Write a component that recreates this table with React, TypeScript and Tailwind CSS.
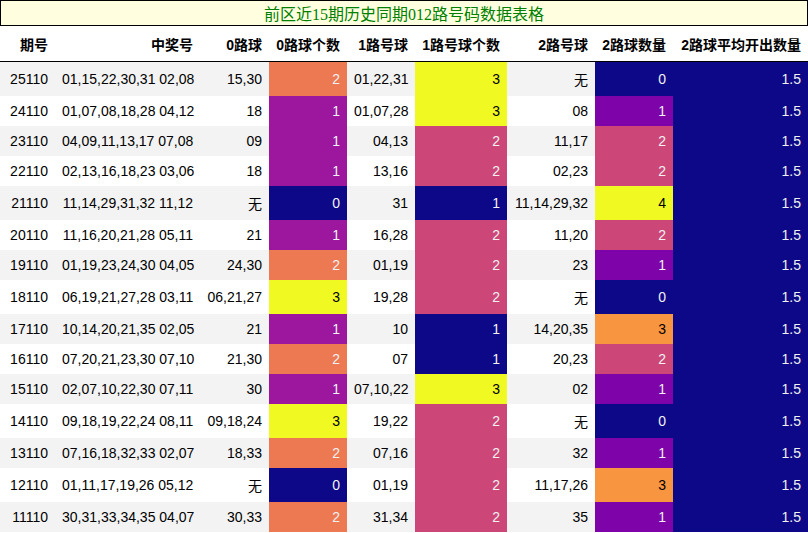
import React from 'react';

type Row = [string, string, string, number, string, number, string, number, string];

const rows: Row[] = [
  ['25110', '01,15,22,30,31 02,08', '15,30', 2, '01,22,31', 3, '无', 0, '1.5'],
  ['24110', '01,07,08,18,28 04,12', '18', 1, '01,07,28', 3, '08', 1, '1.5'],
  ['23110', '04,09,11,13,17 07,08', '09', 1, '04,13', 2, '11,17', 2, '1.5'],
  ['22110', '02,13,16,18,23 03,06', '18', 1, '13,16', 2, '02,23', 2, '1.5'],
  ['21110', '11,14,29,31,32 11,12', '无', 0, '31', 1, '11,14,29,32', 4, '1.5'],
  ['20110', '11,16,20,21,28 05,11', '21', 1, '16,28', 2, '11,20', 2, '1.5'],
  ['19110', '01,19,23,24,30 04,05', '24,30', 2, '01,19', 2, '23', 1, '1.5'],
  ['18110', '06,19,21,27,28 03,11', '06,21,27', 3, '19,28', 2, '无', 0, '1.5'],
  ['17110', '10,14,20,21,35 02,05', '21', 1, '10', 1, '14,20,35', 3, '1.5'],
  ['16110', '07,20,21,23,30 07,10', '21,30', 2, '07', 1, '20,23', 2, '1.5'],
  ['15110', '02,07,10,22,30 07,11', '30', 1, '07,10,22', 3, '02', 1, '1.5'],
  ['14110', '09,18,19,22,24 08,11', '09,18,24', 3, '19,22', 2, '无', 0, '1.5'],
  ['13110', '07,16,18,32,33 02,07', '18,33', 2, '07,16', 2, '32', 1, '1.5'],
  ['12110', '01,11,17,19,26 05,12', '无', 0, '01,19', 2, '11,17,26', 3, '1.5'],
  ['11110', '30,31,33,34,35 04,07', '30,33', 2, '31,34', 2, '35', 1, '1.5'],
];

// plasma gradient, one scale per column
const zeroCls: Record<number, string> = {
  0: 'bg-[#0d0887] text-[#f1f1f1]',
  1: 'bg-[#9c179e] text-[#f1f1f1]',
  2: 'bg-[#ed7953] text-[#f1f1f1]',
  3: 'bg-[#f0f921] text-black',
};
const oneCls: Record<number, string> = {
  1: 'bg-[#0d0887] text-[#f1f1f1]',
  2: 'bg-[#cc4778] text-[#f1f1f1]',
  3: 'bg-[#f0f921] text-black',
};
const twoCls: Record<number, string> = {
  0: 'bg-[#0d0887] text-[#f1f1f1]',
  1: 'bg-[#7e03a8] text-[#f1f1f1]',
  2: 'bg-[#cc4778] text-[#f1f1f1]',
  3: 'bg-[#f89540] text-black',
  4: 'bg-[#f0f921] text-black',
};

const headers = ['期号', '中奖号', '0路球', '0路球个数', '1路号球', '1路号球个数', '2路号球', '2路球数量', '2路球平均开出数量'];
const widths = ['w-[55px]', 'w-[145px]', 'w-[69px]', 'w-[78px]', 'w-[68px]', 'w-[92px]', 'w-[88px]', 'w-[78px]', 'w-[135px]'];

const cell = 'px-[7px] py-[7px] text-right whitespace-nowrap';

export default function App() {
  return (
    <div className="w-[808px] bg-white text-black text-[14px] leading-[normal] font-['Liberation_Sans','Noto_Sans_CJK_SC',sans-serif]">
      <div className="h-[26px] border border-black bg-[#ffffe0] text-center text-[16px] text-[#008000] font-['Liberation_Serif','Noto_Sans_CJK_SC',serif]">
        前区近15期历史同期012路号码数据表格
      </div>
      <table className="w-[808px] table-fixed border-collapse">
        <colgroup>
          {widths.map((w, i) => (
            <col key={i} className={w} />
          ))}
        </colgroup>
        <thead>
          <tr className="border-b border-black">
            {headers.map((h) => (
              <th key={h} className="px-[7px] pt-[8px] pb-[7px] text-right whitespace-nowrap font-bold">
                {h}
              </th>
            ))}
          </tr>
        </thead>
        <tbody>
          {rows.map((r, i) => (
            <tr key={r[0]} className={i % 2 === 0 ? 'bg-[#f3f3f3]' : 'bg-white'}>
              <td className={cell}>{r[0]}</td>
              <td className={cell}>{r[1]}</td>
              <td className={cell}>{r[2]}</td>
              <td className={`${cell} ${zeroCls[r[3]]}`}>{r[3]}</td>
              <td className={cell}>{r[4]}</td>
              <td className={`${cell} ${oneCls[r[5]]}`}>{r[5]}</td>
              <td className={cell}>{r[6]}</td>
              <td className={`${cell} ${twoCls[r[7]]}`}>{r[7]}</td>
              <td className={`${cell} bg-[#0d0887] text-[#f1f1f1]`}>{r[8]}</td>
            </tr>
          ))}
        </tbody>
      </table>
    </div>
  );
}
